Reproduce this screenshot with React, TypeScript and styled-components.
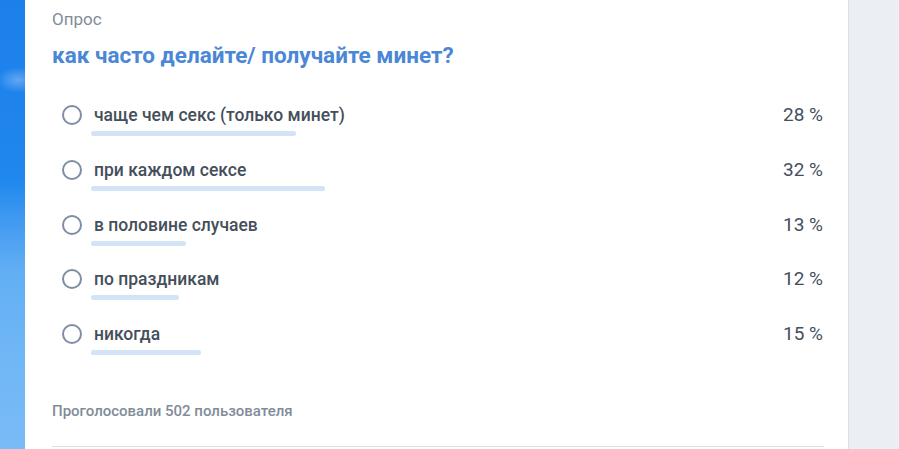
import React from "react";
import styled, { createGlobalStyle } from "styled-components";

const Global = createGlobalStyle`
  html, body { margin: 0; padding: 0; background: #fff; }
  body { font-family: Roboto, "Noto Sans", Arial, sans-serif; }
`;

const Page = styled.div`
  display: flex;
  height: 449px;
  width: 899px;
  overflow: hidden;
`;

const Sky = styled.div`
  width: 25px;
  flex: none;
  background:
    radial-gradient(ellipse 30px 18px at 18px 80px, rgba(255,255,255,0.3), rgba(255,255,255,0) 70%),
    linear-gradient(180deg, #1c80ea 0%, #2087ee 40%, #3d98f0 48%, #62aef4 60%, #70b7f6 80%, #79bbf6 100%);
`;

const Card = styled.div`
  width: 824px;
  flex: none;
  box-sizing: border-box;
  padding: 9px 25px 0 27px;
  background: #fff;
  border-right: 1px solid #d7e0ea;
`;

const Side = styled.div`
  flex: 1;
  background: #ebeff3;
`;

const Label = styled.div`
  font-size: 17px;
  line-height: 20px;
  color: #818c99;
`;

const Title = styled.h2`
  margin: 13px 0 0;
  font-size: 22.5px;
  line-height: 26px;
  font-weight: 700;
  color: #4a87d6;
`;

const Options = styled.div`
  margin-top: 37px;
`;

const Row = styled.div`
  display: grid;
  grid-template-columns: 1fr auto;
  height: 54.75px;
`;

const OptionMain = styled.div`
  display: flex;
  flex-direction: column;
`;

const OptionLine = styled.div`
  display: flex;
  align-items: center;
  height: 20px;
  padding-left: 10px;
`;

const Radio = styled.span`
  width: 20px;
  height: 20px;
  box-sizing: border-box;
  border: 2px solid #7d8ea4;
  border-radius: 50%;
  flex: none;
  margin-right: 12px;
`;

const OptionText = styled.span`
  font-size: 17.5px;
  font-weight: 500;
  color: #454f5b;
`;

const Bar = styled.div`
  margin: 6px 0 0 39px;
  height: 5px;
  border-radius: 3px;
  background: #d4e3f5;
`;

const Percent = styled.div`
  font-size: 19px;
  line-height: 20px;
  color: #454f5b;
  text-align: right;
`;

const Footer = styled.div`
  margin-top: 24.25px;
  font-size: 15px;
  line-height: 16px;
  font-weight: 500;
  color: #818c99;
`;

const Divider = styled.div`
  margin-top: 27px;
  height: 1px;
  background: #dce1e6;
  margin-right: -1px;
`;

const options = [
  { text: "чаще чем секс (только минет)", pct: 28 },
  { text: "при каждом сексе", pct: 32 },
  { text: "в половине случаев", pct: 13 },
  { text: "по праздникам", pct: 12 },
  { text: "никогда", pct: 15 },
];

export default function App() {
  return (
    <>
      <Global />
      <Page>
        <Sky />
        <Card>
          <Label>Опрос</Label>
          <Title>как часто делайте/ получайте минет?</Title>
          <Options>
            {options.map((o) => (
              <Row key={o.text}>
                <OptionMain>
                  <OptionLine>
                    <Radio />
                    <OptionText>{o.text}</OptionText>
                  </OptionLine>
                  <Bar style={{ width: `${(o.pct * 732) / 100}px` }} />
                </OptionMain>
                <Percent>{o.pct} %</Percent>
              </Row>
            ))}
          </Options>
          <Footer>Проголосовали 502 пользователя</Footer>
          <Divider />
        </Card>
        <Side />
      </Page>
    </>
  );
}
